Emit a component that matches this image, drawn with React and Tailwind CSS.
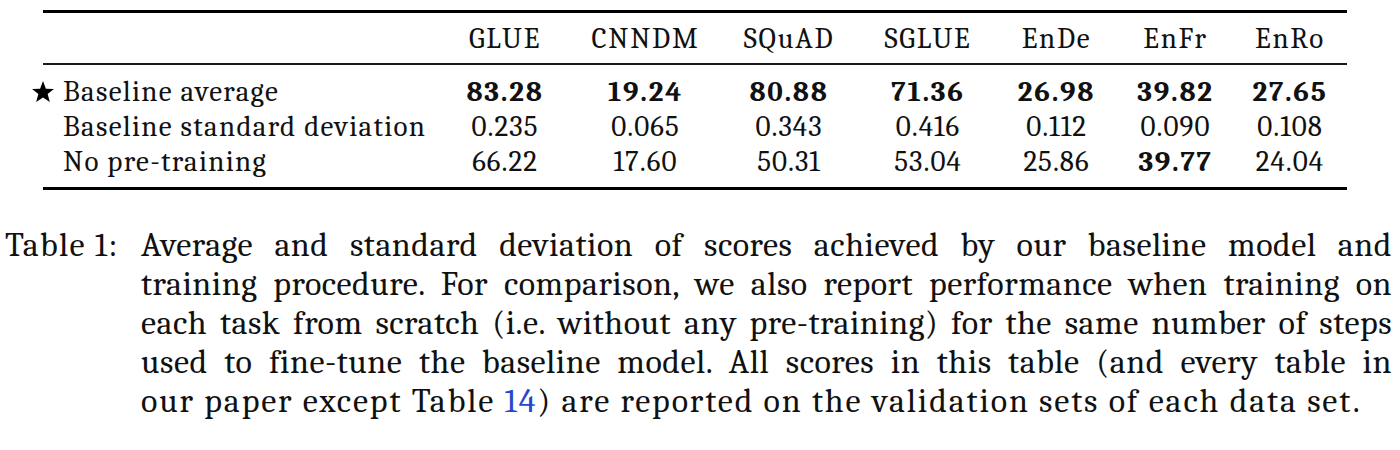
import React from 'react';

const cols = ['GLUE', 'CNNDM', 'SQuAD', 'SGLUE', 'EnDe', 'EnFr', 'EnRo'];

const rows = [
  { label: 'Baseline average', star: true, cells: ['83.28', '19.24', '80.88', '71.36', '26.98', '39.82', '27.65'], bold: [0, 1, 2, 3, 4, 5, 6] },
  { label: 'Baseline standard deviation', cells: ['0.235', '0.065', '0.343', '0.416', '0.112', '0.090', '0.108'], bold: [] },
  { label: 'No pre-training', cells: ['66.22', '17.60', '50.31', '53.04', '25.86', '39.77', '24.04'], bold: [5] },
];

const grid = 'grid grid-cols-[393px_138px_143px_144px_134px_123px_115px_114px]';

const Star = () => (
  <svg viewBox="1.4 1.5 21.2 20.3" className="w-[22px] h-[21px] -ml-[11px] mr-[9px] shrink-0">
    <polygon
      points="12,1.5 14.8,8.9 22.6,9.2 16.5,14.1 18.6,21.8 12,17.4 5.4,21.8 7.5,14.1 1.4,9.2 9.2,8.9"
      fill="#000"
    />
  </svg>
);

const captionLines = [
  'Average and standard deviation of scores achieved by our baseline model and',
  'training procedure. For comparison, we also report performance when training on',
  'each task from scratch (i.e. without any pre-training) for the same number of steps',
  'used to fine-tune the baseline model. All scores in this table (and every table in',
];

export default function App() {
  return (
    <div className="w-[1400px] h-[450px] bg-white text-[#111] font-serif overflow-hidden">
      {/* table */}
      <div className="pt-[10px] pl-[43px]">
        <div className="w-[1304px] text-[29px] leading-[35px] font-serif">
          <div className="h-[3px] bg-black" />
          <div className={`${grid} h-[50px] items-center`}>
            <div />
            {cols.map((c) => (
              <div key={c} className="text-center font-serif tracking-[0.06em]">{c}</div>
            ))}
          </div>
          <div className="h-[2px] bg-[#1a1a1a]" />
          <div className="pt-[9px] pb-[8px]">
            {rows.map((r) => (
              <div key={r.label} className={`${grid} h-[35px] items-center`}>
                <div className="flex items-center">
                  {r.star ? <Star /> : <span className="w-[22px] -ml-[11px] mr-[9px] shrink-0" />}
                  <span className="whitespace-nowrap font-serif tracking-[0.045em]">{r.label}</span>
                </div>
                {r.cells.map((v, i) => (
                  <div
                    key={i}
                    className={
                      r.bold.includes(i)
                        ? 'text-center font-serif font-bold tracking-[0.06em]'
                        : 'text-center font-serif tracking-[0.035em]'
                    }
                  >
                    {v}
                  </div>
                ))}
              </div>
            ))}
          </div>
          <div className="h-[3px] bg-black" />
        </div>
      </div>

      {/* caption */}
      <div className="mt-[36px] flex text-[34px] leading-[39px] font-serif">
        <div className="w-[141px] pl-[5px] shrink-0 whitespace-nowrap font-serif tracking-[0.04em]">Table 1:</div>
        <div className="w-[1251px] font-serif tracking-[0.015em]">
          {captionLines.map((l) => (
            <div key={l} className="text-justify [text-align-last:justify] whitespace-nowrap">{l}</div>
          ))}
          <div className="whitespace-nowrap tracking-[0.055em]">
            our paper except Table <span className="text-[#2347cf]">14</span>) are reported on the validation sets of each data set.
          </div>
        </div>
      </div>
    </div>
  );
}
